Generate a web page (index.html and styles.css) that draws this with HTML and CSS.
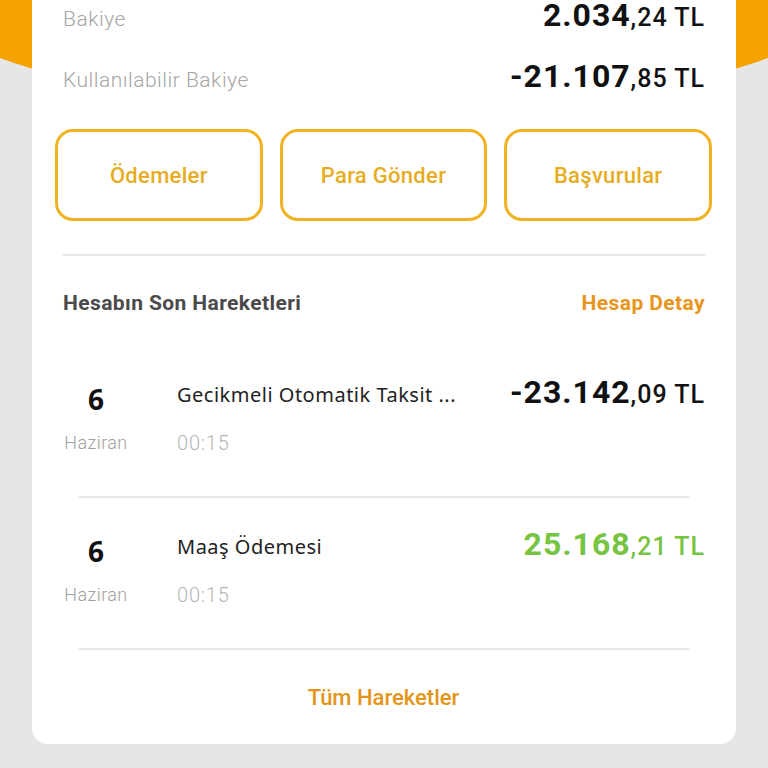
FILE: index.html
```html
<!DOCTYPE html>
<html lang="tr">
<head>
    <meta charset="UTF-8">
    <meta name="viewport" content="width=device-width, initial-scale=1.0">
    <title>Hesabım</title>
    <link rel="stylesheet" href="styles.css">
</head>
<body>
    <div class="header-wrap"><div class="header-bg"></div></div>

    <div class="card">
        <div class="balance-row">
            <span class="balance-label">Bakiye</span>
            <span class="amount big"><b>2.034</b>,24 TL</span>
        </div>
        <div class="balance-row">
            <span class="balance-label">Kullanılabilir Bakiye</span>
            <span class="amount big"><b>-21.107</b>,85 TL</span>
        </div>

        <div class="actions">
            <a href="#" class="action-button">Ödemeler</a>
            <a href="#" class="action-button">Para Gönder</a>
            <a href="#" class="action-button">Başvurular</a>
        </div>

        <hr class="divider">

        <div class="section-head">
            <span class="section-title">Hesabın Son Hareketleri</span>
            <a href="#" class="section-link">Hesap Detay</a>
        </div>

        <div class="tx">
            <div class="tx-date">
                <span class="tx-day">6</span>
                <span class="tx-month">Haziran</span>
            </div>
            <div class="tx-info">
                <span class="tx-title">Gecikmeli Otomatik Taksit ...</span>
                <span class="tx-time">00:15</span>
            </div>
            <span class="amount tx-amount"><b>-23.142</b>,09 TL</span>
        </div>
        <hr class="divider inset">

        <div class="tx">
            <div class="tx-date">
                <span class="tx-day">6</span>
                <span class="tx-month">Haziran</span>
            </div>
            <div class="tx-info">
                <span class="tx-title">Maaş Ödemesi</span>
                <span class="tx-time">00:15</span>
            </div>
            <span class="amount tx-amount income"><b>25.168</b>,21 TL</span>
        </div>
        <hr class="divider inset">

        <div class="card-footer">
            <a href="#" class="all-link">Tüm Hareketler</a>
        </div>
    </div>
</body>
</html>
```

FILE: styles.css
```css
body {
    margin: 0;
    background-color: #e6e6e6;
    font-family: Roboto, "Noto Sans", sans-serif;
    color: #222;
    overflow: hidden;
}
a { text-decoration: none; }

/* turuncu üst alan, kartın arkasında kalan eğri */
.header-wrap {
    position: absolute;
    top: 0;
    left: 0;
    right: 0;
    height: 130px;
    overflow: hidden;
}
.header-bg {
    position: absolute;
    top: -361px;
    left: -200px;
    width: 1168px;
    height: 478px;
    border-radius: 50%;
    background-color: #f5a300;
}

.card {
    position: relative;
    margin: -30px 32px 0;
    padding: 29px 24px 0 23px;
    background-color: #fff;
    border-radius: 16px;
}

.balance-row {
    display: flex;
    justify-content: space-between;
    align-items: baseline;
    height: 61px;
    line-height: 1;
    margin: 0 7px 0 8px;
}
.balance-label {
    font-size: 21px;
    font-weight: 300;
    color: #a6a6a6;
    letter-spacing: 0.5px;
}
.amount {
    font-size: 25px;
    font-weight: 500;
    color: #111;
    white-space: nowrap;
    letter-spacing: 1px;
}
.amount b {
    font-size: 32px;
    font-weight: 700;
}

.actions {
    display: grid;
    grid-template-columns: repeat(3, 1fr);
    gap: 17px;
    margin-top: 8px;
}
.action-button {
    display: flex;
    align-items: center;
    justify-content: center;
    height: 86px;
    border: 3px solid #f0b324;
    border-radius: 18px;
    color: #e6ac22;
    font-size: 22px;
    font-weight: 500;
    letter-spacing: 0.3px;
}

.divider {
    margin: 33px 7px 0 8px;
    border: 0;
    border-top: 2px solid #e8e8e8;
}
.divider.inset {
    margin: 0 23px 0 24px;
}

.section-head {
    display: flex;
    justify-content: space-between;
    align-items: center;
    height: 90px;
    margin: 0 7px 0 8px;
    padding-top: 4px;
    box-sizing: border-box;
}
.section-title {
    font-size: 21px;
    font-weight: 700;
    color: #4a4a4a;
    letter-spacing: 0.4px;
}
.section-link {
    font-size: 21px;
    font-weight: 700;
    color: #e8951c;
    letter-spacing: 0.4px;
}

.tx {
    display: flex;
    align-items: flex-start;
    margin: 0 7px 0 8px;
    padding: 29px 0 41px;
}
.tx-date {
    display: flex;
    flex-direction: column;
    align-items: center;
    width: 66px;
}
.tx-day {
    font-family: "Open Sans", "Noto Sans", sans-serif;
    font-size: 28px;
    font-weight: 700;
    color: #111;
    line-height: 40px;
    margin-top: 4px;
}
.tx-month {
    font-size: 18px;
    font-weight: 300;
    color: #a0a0a0;
    line-height: 24px;
    margin-top: 12px;
    letter-spacing: 0.4px;
}
.tx-info {
    display: flex;
    flex-direction: column;
    flex: 1;
    margin-left: 48px;
}
.tx-title {
    font-family: "Noto Sans", sans-serif;
    font-size: 20px;
    color: #222;
    line-height: 40px;
    letter-spacing: 0.5px;
}
.tx-time {
    font-size: 20px;
    font-weight: 300;
    color: #b4b4b4;
    line-height: 24px;
    margin-top: 16px;
    letter-spacing: 0.8px;
}
.tx-amount {
    line-height: 34px;
}
.tx-amount.income {
    color: #77c443;
}

.card-footer {
    display: flex;
    align-items: center;
    justify-content: center;
    height: 94px;
}
.all-link {
    font-size: 22px;
    font-weight: 500;
    color: #e39419;
}
```
